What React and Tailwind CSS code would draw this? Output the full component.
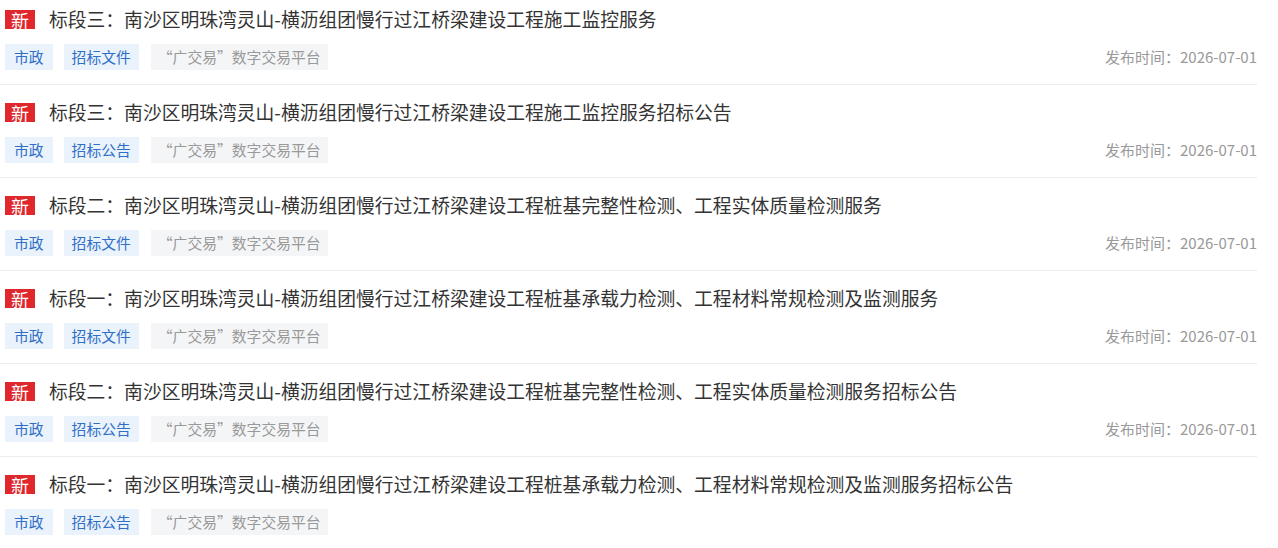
const notices = [
  { title: "标段三：南沙区明珠湾灵山-横沥组团慢行过江桥梁建设工程施工监控服务", kind: "招标文件", date: "2026-07-01" },
  { title: "标段三：南沙区明珠湾灵山-横沥组团慢行过江桥梁建设工程施工监控服务招标公告", kind: "招标公告", date: "2026-07-01" },
  { title: "标段二：南沙区明珠湾灵山-横沥组团慢行过江桥梁建设工程桩基完整性检测、工程实体质量检测服务", kind: "招标文件", date: "2026-07-01" },
  { title: "标段一：南沙区明珠湾灵山-横沥组团慢行过江桥梁建设工程桩基承载力检测、工程材料常规检测及监测服务", kind: "招标文件", date: "2026-07-01" },
  { title: "标段二：南沙区明珠湾灵山-横沥组团慢行过江桥梁建设工程桩基完整性检测、工程实体质量检测服务招标公告", kind: "招标公告", date: "2026-07-01" },
  { title: "标段一：南沙区明珠湾灵山-横沥组团慢行过江桥梁建设工程桩基承载力检测、工程材料常规检测及监测服务招标公告", kind: "招标公告", date: "" },
]

export default function App() {
  return (
    <div
      className="bg-white w-[1278px] h-[548px] overflow-hidden"
      style={{ fontFamily: '"Noto Sans CJK SC", "Noto Sans", sans-serif' }}
    >
      <ul className="w-[1257px] -mt-[8px]">
        {notices.map((n, i) => (
          <li key={i} className="pt-[17px] pb-[14px] border-b border-[#ececec]">
            {/* 标题行 */}
            <div className="flex items-center h-[21px]">
              <span className="ml-[5px] w-[30px] h-[19px] flex items-center justify-center bg-[#e0282c] text-white text-[18px] leading-none">
                新
              </span>
              <span className="ml-[14px] text-[18.8px] leading-none text-[#333] whitespace-nowrap">
                {n.title}
              </span>
            </div>

            {/* 标签 + 发布时间 */}
            <div className="flex items-center mt-[14px] h-[26px]">
              <span className="ml-[5px] h-[26px] px-[9px] flex items-center bg-[#eaf2fc] text-[#2f6fc6] text-[14.8px]">
                市政
              </span>
              <span className="ml-[11px] h-[26px] px-[8px] flex items-center bg-[#eaf2fc] text-[#2f6fc6] text-[14.8px]">
                {n.kind}
              </span>
              <span className="ml-[12px] h-[26px] px-[7px] flex items-center bg-[#f4f5f6] text-[#999] text-[14.8px]">
                “广交易”数字交易平台
              </span>
              {n.date && (
                <span className="ml-auto text-[15px] text-[#999]">
                  发布时间：{n.date}
                </span>
              )}
            </div>
          </li>
        ))}
      </ul>
    </div>
  )
}
